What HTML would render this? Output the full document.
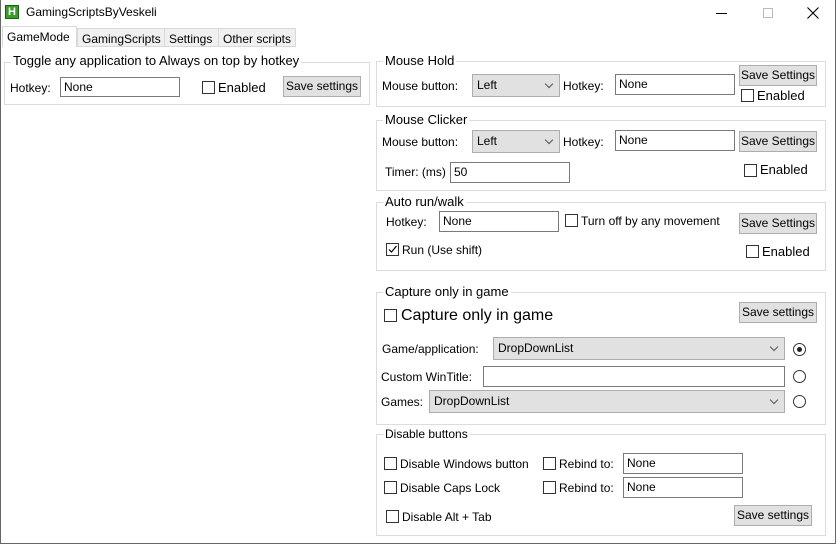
<!DOCTYPE html>
<html><head><meta charset="utf-8"><style>
*{box-sizing:border-box;margin:0;padding:0}
body{width:837px;height:544px;overflow:hidden;background:#fff;font-family:"Liberation Sans",sans-serif;font-size:12px;color:#000;position:relative}
.a{position:absolute;white-space:nowrap}
.win{position:absolute;left:0;top:0;width:836px;height:544px;border:1px solid #666;border-top:none}
.grp{position:absolute;border:1px solid #dcdcdc}
.lg{position:absolute;background:#fff;padding:0 2px;font-size:13px;line-height:14px}
.tb{position:absolute;border:1px solid #7a7a7a;background:#fff;padding:2px 3px;line-height:14px;font-size:12px}
.cb{position:absolute;width:13px;height:13px;border:1px solid #333;background:#fff}
.btn{position:absolute;border:1px solid #adadad;background:#e1e1e1;text-align:center;font-size:12px}
.cmb{position:absolute;border:1px solid #adadad;background:#e1e1e1;padding-left:4px;font-size:12px}
.cmb:after{content:"";position:absolute;right:7px;top:6px;width:5px;height:5px;border-right:1px solid #555;border-bottom:1px solid #555;transform:rotate(45deg)}
.rd{position:absolute;width:13px;height:13px;border:1px solid #333;border-radius:50%;background:#fff}
.tab{position:absolute;top:28px;height:19px;border:1px solid #d9d9d9;background:#f0f0f0;padding:3px 4px 0;font-size:12px}
</style></head><body>
<div class="win"></div>
<div class="a" style="left:1px;top:26px;width:834px;height:20px;background:#fff"></div>
<div class="a" style="left:5px;top:5px;width:14px;height:14px;background:#3a9a2a;border:1px solid #1f5f16;color:#fff;font-weight:bold;font-size:11px;line-height:12px;text-align:center">H</div>
<div class="a" style="left:26px;top:5px;font-size:12px">GamingScriptsByVeskeli</div>
<div class="a" style="left:716px;top:13px;width:11px;height:1px;background:#000"></div>
<div class="a" style="left:763px;top:8px;width:10px;height:10px;border:1px solid #bbb"></div>
<svg class="a" style="left:807px;top:7px" width="12" height="12"><path d="M0.5 0.5L11.5 11.5M11.5 0.5L0.5 11.5" stroke="#000" stroke-width="1.1"/></svg>
<div class="tab" style="left:77px;width:88px">GamingScripts</div>
<div class="tab" style="left:164px;width:55px">Settings</div>
<div class="tab" style="left:218px;width:78px">Other scripts</div>
<div class="a" style="left:2px;top:26px;width:75px;height:21px;background:#fff;border:1px solid #d9d9d9;border-bottom:none;padding:3px 4px 0">GameMode</div>

<div class="grp" style="left:4px;top:62px;width:366px;height:43px"></div>
<div class="lg" style="left:11px;top:54px">Toggle any application to Always on top by hotkey</div>
<div class="a" style="left:10px;top:81px">Hotkey:</div>
<div class="tb" style="left:60px;top:77px;width:120px;height:20px">None</div>
<div class="cb" style="left:202px;top:81px"></div>
<div class="a" style="left:218px;top:80px;font-size:13px">Enabled</div>
<div class="btn" style="left:283px;top:76px;width:78px;height:21px;line-height:19px">Save settings</div>

<div class="grp" style="left:376px;top:61px;width:450px;height:46px"></div>
<div class="lg" style="left:383px;top:54px">Mouse Hold</div>
<div class="a" style="left:382px;top:79px">Mouse button:</div>
<div class="cmb" style="left:472px;top:74px;width:88px;height:23px;line-height:21px">Left</div>
<div class="a" style="left:563px;top:79px">Hotkey:</div>
<div class="tb" style="left:615px;top:74px;width:120px;height:21px">None</div>
<div class="btn" style="left:739px;top:65px;width:78px;height:21px;line-height:19px">Save Settings</div>
<div class="cb" style="left:741px;top:89px"></div>
<div class="a" style="left:757px;top:88px;font-size:13px">Enabled</div>

<div class="grp" style="left:376px;top:120px;width:450px;height:71px"></div>
<div class="lg" style="left:383px;top:113px">Mouse Clicker</div>
<div class="a" style="left:382px;top:135px">Mouse button:</div>
<div class="cmb" style="left:472px;top:130px;width:88px;height:23px;line-height:21px">Left</div>
<div class="a" style="left:563px;top:135px">Hotkey:</div>
<div class="tb" style="left:615px;top:130px;width:120px;height:21px">None</div>
<div class="btn" style="left:739px;top:131px;width:78px;height:21px;line-height:19px">Save Settings</div>
<div class="a" style="left:385px;top:165px">Timer: (ms)</div>
<div class="tb" style="left:450px;top:162px;width:120px;height:21px">50</div>
<div class="cb" style="left:744px;top:164px"></div>
<div class="a" style="left:760px;top:162px;font-size:13px">Enabled</div>

<div class="grp" style="left:376px;top:202px;width:450px;height:69px"></div>
<div class="lg" style="left:383px;top:195px">Auto run/walk</div>
<div class="a" style="left:386px;top:215px">Hotkey:</div>
<div class="tb" style="left:439px;top:211px;width:120px;height:21px">None</div>
<div class="cb" style="left:565px;top:214px"></div>
<div class="a" style="left:581px;top:214px">Turn off by any movement</div>
<div class="btn" style="left:739px;top:213px;width:78px;height:21px;line-height:19px">Save Settings</div>
<div class="cb" style="left:386px;top:243px"></div>
<svg class="a" style="left:387px;top:244px" width="11" height="11"><path d="M2 5.5L4.5 8L9.5 2" stroke="#000" fill="none" stroke-width="1.2"/></svg>
<div class="a" style="left:402px;top:243px">Run (Use shift)</div>
<div class="cb" style="left:746px;top:245px"></div>
<div class="a" style="left:762px;top:244px;font-size:13px">Enabled</div>

<div class="grp" style="left:376px;top:292px;width:450px;height:133px"></div>
<div class="lg" style="left:383px;top:285px">Capture only in game</div>
<div class="cb" style="left:384px;top:309px"></div>
<div class="a" style="left:401px;top:307px;font-size:16px">Capture only in game</div>
<div class="btn" style="left:739px;top:302px;width:78px;height:21px;line-height:19px">Save settings</div>
<div class="a" style="left:382px;top:342px">Game/application:</div>
<div class="cmb" style="left:493px;top:337px;width:292px;height:23px;line-height:21px">DropDownList</div>
<div class="rd" style="left:793px;top:343px"></div>
<div class="a" style="left:797px;top:347px;width:5px;height:5px;border-radius:50%;background:#222"></div>
<div class="a" style="left:381px;top:370px">Custom WinTitle:</div>
<div class="tb" style="left:483px;top:366px;width:302px;height:21px"></div>
<div class="rd" style="left:793px;top:370px"></div>
<div class="a" style="left:381px;top:395px">Games:</div>
<div class="cmb" style="left:429px;top:390px;width:356px;height:23px;line-height:21px">DropDownList</div>
<div class="rd" style="left:793px;top:395px"></div>

<div class="grp" style="left:376px;top:434px;width:450px;height:102px"></div>
<div class="lg" style="left:383px;top:427px;font-size:12px">Disable buttons</div>
<div class="cb" style="left:384px;top:457px"></div>
<div class="a" style="left:400px;top:457px">Disable Windows button</div>
<div class="cb" style="left:543px;top:457px"></div>
<div class="a" style="left:559px;top:457px">Rebind to:</div>
<div class="tb" style="left:623px;top:453px;width:120px;height:21px">None</div>
<div class="cb" style="left:384px;top:481px"></div>
<div class="a" style="left:400px;top:481px">Disable Caps Lock</div>
<div class="cb" style="left:543px;top:481px"></div>
<div class="a" style="left:559px;top:481px">Rebind to:</div>
<div class="tb" style="left:623px;top:477px;width:120px;height:21px">None</div>
<div class="cb" style="left:386px;top:510px"></div>
<div class="a" style="left:402px;top:510px">Disable Alt + Tab</div>
<div class="btn" style="left:734px;top:505px;width:78px;height:21px;line-height:19px">Save settings</div>
</body></html>
